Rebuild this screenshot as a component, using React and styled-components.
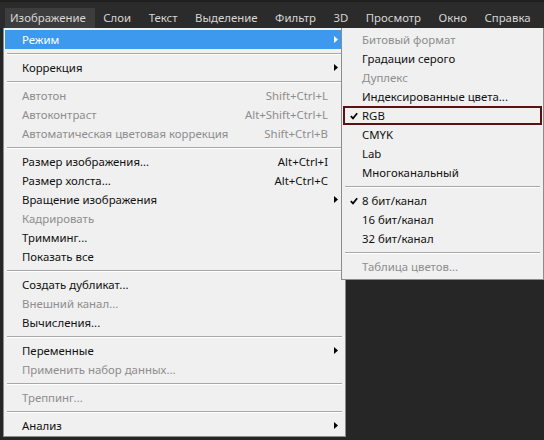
import React from 'react'
import styled, { createGlobalStyle } from 'styled-components'

const Global = createGlobalStyle`
  html, body {
    margin: 0;
    padding: 0;
    background: #262626;
  }
  body {
    font-family: "Noto Sans", "Open Sans", sans-serif;
    font-size: 11.4px;
    width: 544px;
    height: 440px;
    overflow: hidden;
  }
`

const topItems = ['Изображение', 'Слои', 'Текст', 'Выделение', 'Фильтр', '3D', 'Просмотр', 'Окно', 'Справка']

// main dropdown, null = separator
const mainItems = [
  { label: 'Режим', sub: true, active: true },
  null,
  { label: 'Коррекция', sub: true },
  null,
  { label: 'Автотон', key: 'Shift+Ctrl+L', off: true },
  { label: 'Автоконтраст', key: 'Alt+Shift+Ctrl+L', off: true },
  { label: 'Автоматическая цветовая коррекция', key: 'Shift+Ctrl+B', off: true },
  null,
  { label: 'Размер изображения...', key: 'Alt+Ctrl+I' },
  { label: 'Размер холста...', key: 'Alt+Ctrl+C' },
  { label: 'Вращение изображения', sub: true },
  { label: 'Кадрировать', off: true },
  { label: 'Тримминг...' },
  { label: 'Показать все' },
  null,
  { label: 'Создать дубликат...' },
  { label: 'Внешний канал...', off: true },
  { label: 'Вычисления...' },
  null,
  { label: 'Переменные', sub: true },
  { label: 'Применить набор данных...', off: true },
  null,
  { label: 'Треппинг...', off: true },
  null,
  { label: 'Анализ', sub: true },
]

const subItems = [
  { label: 'Битовый формат', off: true },
  { label: 'Градации серого' },
  { label: 'Дуплекс', off: true },
  { label: 'Индексированные цвета...' },
  { label: 'RGB', check: true, focus: true },
  { label: 'CMYK' },
  { label: 'Lab' },
  { label: 'Многоканальный' },
  null,
  { label: '8 бит/канал', check: true },
  { label: '16 бит/канал' },
  { label: '32 бит/канал' },
  null,
  { label: 'Таблица цветов...', off: true },
]

function Arrow({ light }) {
  return (
    <ArrowBox viewBox="0 0 4 7">
      <path d="M0 0 L4 3.5 L0 7 Z" fill={light ? '#fff' : '#000'} />
    </ArrowBox>
  )
}

function Check() {
  return (
    <CheckBox viewBox="0 0 8 8">
      <path d="M0.8 4.2 L3 6.4 L7.2 1.2" fill="none" stroke="#000" strokeWidth="1.7" />
    </CheckBox>
  )
}

export default function App() {
  return (
    <>
      <Global />
      <Screen>
        <MenuBar>
          {topItems.map((t, i) => (
            <TopItem key={t} open={i === 0}>{t}</TopItem>
          ))}
        </MenuBar>
        <DropArea>
          <MainMenu>
            {mainItems.map((it, i) =>
              it === null ? (
                <Sep key={i} />
              ) : (
                <Row key={i} active={it.active} off={it.off}>
                  <Label>{it.label}</Label>
                  {it.key && <Key>{it.key}</Key>}
                  {it.sub && <Arrow light={it.active} />}
                </Row>
              )
            )}
          </MainMenu>
          <SubMenu>
            {subItems.map((it, i) =>
              it === null ? (
                <Sep key={i} />
              ) : (
                <SubRow key={i} off={it.off} focus={it.focus}>
                  <CheckSlot>{it.check && <Check />}</CheckSlot>
                  {it.label}
                </SubRow>
              )
            )}
          </SubMenu>
        </DropArea>
      </Screen>
    </>
  )
}

const Screen = styled.div`
  width: 544px;
  height: 440px;
  display: flex;
  flex-direction: column;
  background: #262626;
`
const MenuBar = styled.div`
  height: 28px;
  box-sizing: border-box;
  display: flex;
  align-items: flex-end;
  padding-left: 5px;
  background: #2b2b2b;
  border-top: 2px solid #1f1f1f;
`
const TopItem = styled.div`
  height: 20px;
  line-height: 19px;
  padding: 0 9.5px 0 5px;
  margin-right: 3px;
  font-size: 11.4px;
  color: #d6d6d6;
  background: ${p => (p.open ? '#3d3d3d' : 'transparent')};
  white-space: nowrap;
`
const DropArea = styled.div`
  position: relative;
  flex: 1;
`
const MainMenu = styled.div`
  margin-left: 3px;
  width: 343px;
  box-sizing: border-box;
  background: #f0f0f0;
  border: 1px solid #8c8c8c;
  border-top: none;
  padding: 2px 1px 1px 1px;
  display: flex;
  flex-direction: column;
`
const Row = styled.div`
  height: 19px;
  display: flex;
  align-items: center;
  padding: 0 6px 0 17px;
  color: ${p => (p.active ? '#fff' : p.off ? '#8d8d8d' : '#111')};
  background: ${p => (p.active ? '#3d99ee' : 'transparent')};
  white-space: nowrap;
`
const Label = styled.span`
  flex: 1;
`
const Key = styled.span`
  margin-right: 10px;
`
const ArrowBox = styled.svg`
  width: 4px;
  height: 7px;
  margin-left: auto;
`
const Sep = styled.div`
  height: 9px;
  display: flex;
  align-items: center;
  &::before {
    content: '';
    flex: 1;
    margin: 0 2px;
    height: 1px;
    background: #a8a8a8;
    box-shadow: 0 1px 0 #fff;
  }
`
const SubMenu = styled.div`
  position: absolute;
  left: 341px;
  top: 0;
  width: 203px;
  box-sizing: border-box;
  background: #f0f0f0;
  border: 1px solid #8c8c8c;
  border-top: none;
  padding: 2px 1px 3px 1px;
  display: flex;
  flex-direction: column;
`
const SubRow = styled.div`
  height: 19px;
  box-sizing: border-box;
  display: flex;
  align-items: center;
  color: ${p => (p.off ? '#8d8d8d' : '#111')};
  border: 2px solid ${p => (p.focus ? '#5b1212' : 'transparent')};
  white-space: nowrap;
`
const CheckSlot = styled.span`
  width: 17px;
  display: flex;
  justify-content: center;
`
const CheckBox = styled.svg`
  width: 8px;
  height: 8px;
`
